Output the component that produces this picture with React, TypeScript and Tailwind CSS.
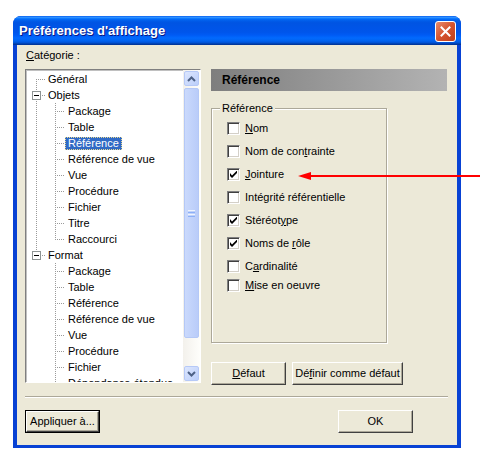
import React from "react";

type Row = {
  label: string;
  level: 0 | 1;
  rootV?: "top" | "bottom" | "full" | "none";
  childV?: "top" | "full";
  box?: boolean;
  selected?: boolean;
};

const rows: Row[] = [
  { label: "Général", level: 0, rootV: "bottom" },
  { label: "Objets", level: 0, rootV: "full", box: true },
  { label: "Package", level: 1, rootV: "full", childV: "full" },
  { label: "Table", level: 1, rootV: "full", childV: "full" },
  { label: "Référence", level: 1, rootV: "full", childV: "full", selected: true },
  { label: "Référence de vue", level: 1, rootV: "full", childV: "full" },
  { label: "Vue", level: 1, rootV: "full", childV: "full" },
  { label: "Procédure", level: 1, rootV: "full", childV: "full" },
  { label: "Fichier", level: 1, rootV: "full", childV: "full" },
  { label: "Titre", level: 1, rootV: "full", childV: "full" },
  { label: "Raccourci", level: 1, rootV: "full", childV: "top" },
  { label: "Format", level: 0, rootV: "top", box: true },
  { label: "Package", level: 1, rootV: "none", childV: "full" },
  { label: "Table", level: 1, rootV: "none", childV: "full" },
  { label: "Référence", level: 1, rootV: "none", childV: "full" },
  { label: "Référence de vue", level: 1, rootV: "none", childV: "full" },
  { label: "Vue", level: 1, rootV: "none", childV: "full" },
  { label: "Procédure", level: 1, rootV: "none", childV: "full" },
  { label: "Fichier", level: 1, rootV: "none", childV: "full" },
  { label: "Dépendance étendue", level: 1, rootV: "none", childV: "full" },
];

const DOT = "#9A9A9A";

function vDots(x: number, y0: number, y1: number, key: string) {
  const out: React.ReactElement[] = [];
  for (let y = y0; y < y1; y += 2) {
    out.push(<rect key={key + y} x={x} y={y} width={1} height={1} fill={DOT} />);
  }
  return out;
}
function hDots(y: number, x0: number, x1: number, key: string) {
  const out: React.ReactElement[] = [];
  for (let x = x0; x < x1; x += 2) {
    out.push(<rect key={key + x} x={x} y={y} width={1} height={1} fill={DOT} />);
  }
  return out;
}

function Gutter({ row }: { row: Row }) {
  const w = row.level === 0 ? 19 : 39;
  const els: React.ReactElement[] = [];
  if (row.rootV === "full") els.push(...vDots(10, 0, 16, "rv"));
  if (row.rootV === "bottom") els.push(...vDots(10, 8, 16, "rv"));
  if (row.rootV === "top") els.push(...vDots(10, 0, 8, "rv"));
  if (row.level === 0) {
    els.push(...hDots(8, row.box ? 16 : 12, 19, "rh"));
  } else {
    if (row.childV === "full") els.push(...vDots(29, 0, 16, "cv"));
    if (row.childV === "top") els.push(...vDots(29, 0, 9, "cv"));
    els.push(...hDots(8, 31, 39, "ch"));
  }
  return (
    <svg width={w} height={16} className="shrink-0 block">
      {els}
      {row.box && (
        <g>
          <rect x={6.5} y={4.5} width={8} height={8} fill="#FFFFFF" stroke="#8E9494" />
          <rect x={8} y={8} width={5} height={1} fill="#000000" />
        </g>
      )}
    </svg>
  );
}

function ScrollBtn({ dir }: { dir: "up" | "down" }) {
  return (
    <div className="w-[15px] h-[15px] rounded-[2px] border border-[#B6C9F7] bg-[linear-gradient(135deg,#DCE6FE,#BCCFFA)] flex items-center justify-center">
      <svg width="9" height="6" viewBox="0 0 9 6">
        {dir === "up" ? (
          <path d="M1 5 L4.5 1.5 L8 5" stroke="#4D6185" strokeWidth="2" fill="none" />
        ) : (
          <path d="M1 1 L4.5 4.5 L8 1" stroke="#4D6185" strokeWidth="2" fill="none" />
        )}
      </svg>
    </div>
  );
}

function ScrollBar() {
  return (
    <div className="w-[17px] shrink-0 flex flex-col items-center py-[1px] bg-[linear-gradient(to_right,#F3F1EC,#FEFEFB)]">
      <ScrollBtn dir="up" />
      <div className="mt-[2px] w-[15px] h-[250px] rounded-[2px] border border-[#B4C8F6] bg-[linear-gradient(to_right,#CAD9FC,#B9CCF9)] flex items-center justify-center">
        <div className="flex flex-col gap-[1px]">
          <div className="w-[7px] h-[1px] bg-[#EEF4FE]" />
          <div className="w-[7px] h-[1px] bg-[#8CB0F8]" />
          <div className="w-[7px] h-[1px] bg-[#EEF4FE]" />
          <div className="w-[7px] h-[1px] bg-[#8CB0F8]" />
        </div>
      </div>
      <div className="flex-1" />
      <ScrollBtn dir="down" />
    </div>
  );
}

function Tree() {
  return (
    <div className="w-[176px] h-[314px] bg-white border border-t-[#7F7F7F] border-l-[#7F7F7F] border-b-white border-r-white shadow-[inset_1px_1px_0_#C0C0C0] flex overflow-hidden">
      <div className="flex-1 pt-[1px] overflow-hidden">
        {rows.map((r, i) => (
          <div key={i} className="h-[16px] flex items-center whitespace-nowrap">
            <Gutter row={r} />
            <span
              className={
                r.selected
                  ? "h-[13px] leading-[13px] px-[3px] bg-[#316AC5] text-white outline-1 outline-dotted outline-[#E8D890] -outline-offset-1"
                  : "h-[13px] leading-[13px] px-[3px] text-black"
              }
            >
              {r.label}
            </span>
          </div>
        ))}
      </div>
      <ScrollBar />
    </div>
  );
}

function CheckBox({ checked }: { checked?: boolean }) {
  return (
    <span className="w-[13px] h-[13px] shrink-0 bg-white border border-t-[#808080] border-l-[#808080] border-b-white border-r-white shadow-[inset_1px_1px_0_#404040,inset_-1px_-1px_0_#D4D0C8] flex items-center justify-center">
      {checked && (
        <svg width="7" height="7" viewBox="0 0 7 7">
          <path d="M0 2 V5 L2 7 L7 2 V-0.5 L2 4.5 Z" fill="#000" />
        </svg>
      )}
    </span>
  );
}

function CheckRow({ children, checked, h = "h-[23px]" }: { children: React.ReactNode; checked?: boolean; h?: string }) {
  return (
    <div className={`${h} flex items-center pl-[15px]`}>
      <CheckBox checked={checked} />
      <span className="ml-[5px] leading-[13px]">{children}</span>
    </div>
  );
}

function Btn({ children, w }: { children: React.ReactNode; w: string }) {
  return (
    <div className={`${w} h-[23px] bg-[#ECE9D8] border border-t-white border-l-white border-b-[#404040] border-r-[#404040] shadow-[inset_-1px_-1px_0_#ACA899] flex items-center justify-center`}>
      {children}
    </div>
  );
}

export default function App() {
  return (
    <div className="relative w-[487px] h-[461px] bg-white pt-[16px] pl-[13px] font-['Liberation_Sans',Arial,sans-serif] text-[11px] text-black">
      <div className="w-[448px] h-[432px] rounded-t-[8px] overflow-hidden bg-[#0842D4] flex flex-col">
        {/* Title bar */}
        <div className="h-[29px] shrink-0 flex pl-[6px] pr-[5px] bg-[linear-gradient(to_bottom,#0058EE_0%,#3593FF_4%,#288EFF_6%,#127DFF_8%,#036FFC_10%,#0262EE_14%,#0057E5_20%,#0054E3_24%,#0055EB_56%,#005BF5_66%,#026AFE_76%,#0062EF_86%,#0052D6_92%,#0040AB_96%,#003092_100%)]">
          <div className="flex-1 flex items-center pt-[1px] text-white font-bold text-[13px] [text-shadow:1px_1px_0_#0A1883]">
            Préférences d'affichage
          </div>
          <div className="mt-[5px] w-[21px] h-[21px] rounded-[3px] border border-white bg-[linear-gradient(135deg,#E88C6F,#D5532E_50%,#C0401C)] flex items-center justify-center">
            <svg width="13" height="13" viewBox="0 0 13 13">
              <path d="M2.5 2.5 L10.5 10.5 M10.5 2.5 L2.5 10.5" stroke="#FFFFFF" strokeWidth="2" strokeLinecap="square" />
            </svg>
          </div>
        </div>
        {/* Body */}
        <div className="mx-[4px] mb-[3px] h-[400px] bg-[#ECE9D8] flex flex-col">
          <div className="flex h-[340px]">
            {/* Left column */}
            <div className="pl-[8px] flex flex-col">
              <div className="h-[24px] pt-[3px] leading-[14px] pl-[1px]">
                <u>C</u>atégorie :
              </div>
              <Tree />
            </div>
            {/* Right column */}
            <div className="ml-[10px] pt-[24px] flex flex-col">
              <div className="w-[236px] h-[22px] flex items-center pl-[11px] font-bold text-[12px] bg-[linear-gradient(to_right,#7E7E7E,#B3B3B3)]">
                Référence
              </div>
              <div className="relative mt-[17px] w-[176px] h-[235px] border border-[#ACA899] shadow-[inset_1px_1px_0_#FFFFFF,1px_1px_0_#FFFFFF] pt-[8px]">
                <span className="absolute -top-[7px] left-[8px] px-[2px] bg-[#ECE9D8] leading-[13px]">
                  Référence
                </span>
                <CheckRow>
                  <u>N</u>om
                </CheckRow>
                <CheckRow>
                  Nom de con<u>t</u>rainte
                </CheckRow>
                <CheckRow checked>
                  <u>J</u>ointure
                </CheckRow>
                <CheckRow>Intégrité référentielle</CheckRow>
                <CheckRow checked>
                  Stéréot<u>y</u>pe
                </CheckRow>
                <CheckRow checked>
                  Noms de <u>r</u>ôle
                </CheckRow>
                <CheckRow>
                  C<u>a</u>rdinalité
                </CheckRow>
                <CheckRow h="h-[15px]">
                  <u>M</u>ise en oeuvre
                </CheckRow>
              </div>
              <div className="mt-[19px] flex gap-[6px]">
                <Btn w="w-[75px]">
                  <span>
                    <u>D</u>éfaut
                  </span>
                </Btn>
                <Btn w="w-[111px]">
                  <span>
                    Dé<u>f</u>inir comme défaut
                  </span>
                </Btn>
              </div>
            </div>
          </div>
          {/* Separator */}
          <div className="mt-[11px] ml-[8px] w-[423px] h-[2px] border-t border-t-[#ACA899] border-b border-b-white" />
          {/* Bottom buttons */}
          <div className="mt-[12px] flex">
            <div className="ml-[8px] w-[75px] h-[23px] border border-black">
              <div className="w-full h-full bg-[#ECE9D8] border border-t-white border-l-white border-b-[#404040] border-r-[#404040] shadow-[inset_-1px_-1px_0_#ACA899] flex items-center justify-center">
                Appliquer à...
              </div>
            </div>
            <div className="ml-[238px]">
              <Btn w="w-[75px]">OK</Btn>
            </div>
          </div>
        </div>
      </div>
      {/* Red annotation arrow */}
      <svg className="absolute left-[296px] top-[170px]" width="186" height="12" viewBox="0 0 186 12">
        <rect x="12" y="5" width="172" height="2" fill="#FF0000" />
        <polygon points="2,6 15,2 15,10" fill="#FF0000" />
      </svg>
    </div>
  );
}
